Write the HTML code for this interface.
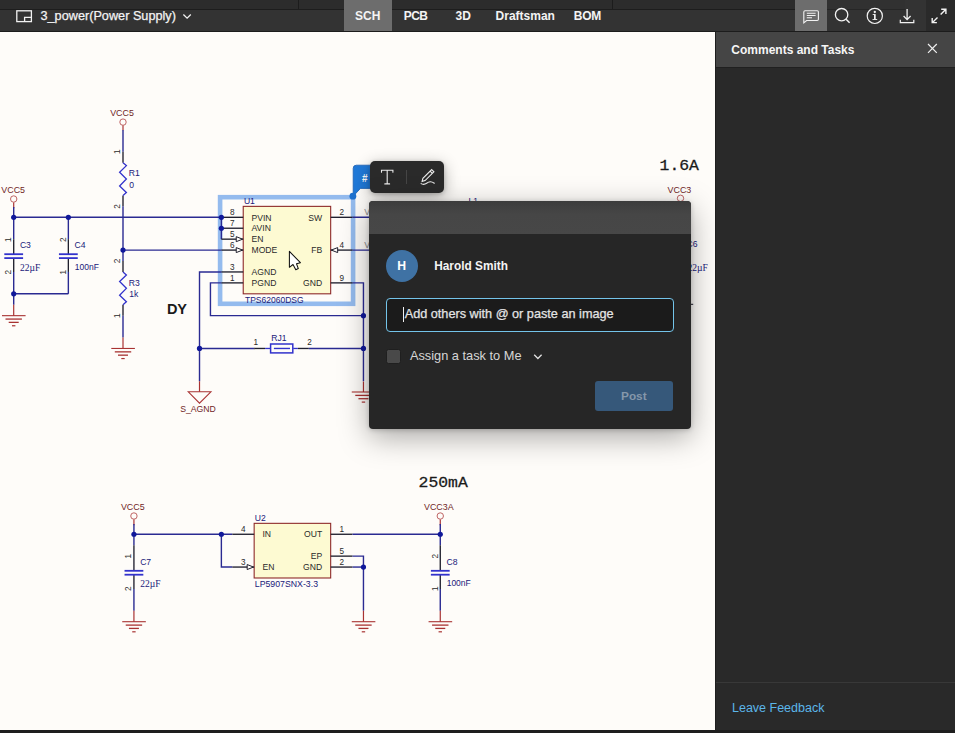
<!DOCTYPE html>
<html>
<head>
<meta charset="utf-8">
<title>3_power</title>
<style>
*{box-sizing:border-box;margin:0;padding:0}
html,body{width:955px;height:733px;overflow:hidden;background:#fefcf9;font-family:"Liberation Sans",sans-serif;}
#topstrip{position:absolute;left:0;top:0;width:955px;height:9px;background:#2c2c2c;}
#topstrip .v{position:absolute;top:0;width:1px;height:9px;background:#1c1c1c;}
#topline{position:absolute;left:0;top:9px;width:955px;height:1px;background:#1d1d1d;}
#toolbar{position:absolute;left:0;top:10px;width:955px;height:22px;background:#333333;border-bottom:1px solid #1c1c1c;}
#toolbar .t{position:absolute;top:-4px;height:21px;line-height:21px;color:#f4f4f4;font-size:12px;font-weight:bold;white-space:nowrap;}
#title{-webkit-text-stroke:0.25px #f4f4f4;position:absolute;left:40.5px;top:-4px;height:21px;line-height:21px;color:#f4f4f4;font-size:12.7px;white-space:nowrap;}
#schtab{position:absolute;left:344px;top:-10px;width:48px;height:31px;background:#6d6d6d;}
#cmtbtn{position:absolute;left:795px;top:-10px;width:32px;height:31px;background:#6d6d6d;}
#expbtn{position:absolute;left:926px;top:-10px;width:29px;height:31px;background:#2a2a2a;}
#tbicons{position:absolute;left:0;top:0;width:955px;height:32px;}
#canvas{position:absolute;left:0;top:32px;width:715px;height:698px;background:#fefcf9;overflow:hidden;}
#bottomline{position:absolute;left:0;top:730px;width:955px;height:3px;background:#1e1e1e;}
#panel{position:absolute;left:715px;top:32px;width:240px;height:698px;background:#292929;border-left:1px solid #1e1e1e;}
#phead{position:absolute;left:0;top:0;width:239px;height:36px;background:#454545;border-bottom:1px solid #202020;}
#phead span{position:absolute;left:15.3px;top:-0.5px;line-height:36px;font-size:12px;font-weight:bold;color:#f6f6f6;white-space:nowrap;}
#pfoot{position:absolute;left:0;top:650px;width:239px;height:48px;border-top:1px solid #383838;}
#pfoot span{position:absolute;left:16px;top:18px;line-height:15px;font-size:12.5px;color:#5bb6ea;white-space:nowrap;}
svg text{font-family:"Liberation Sans",sans-serif;}
/* floating comment UI */
#tag{position:absolute;left:0;top:0;}
#mini{position:absolute;left:369.5px;top:161px;width:74.5px;height:32px;background:#2a2a2a;border-radius:5px;box-shadow:0 4px 16px rgba(0,0,0,.32),0 1px 4px rgba(0,0,0,.2);}
#mini .div{position:absolute;left:36.5px;top:9px;width:1px;height:14px;background:#454545;}
#dlg{position:absolute;left:369.2px;top:201px;width:321.8px;height:227.5px;background:#262626;border-radius:4px;box-shadow:0 8px 30px rgba(0,0,0,.34),0 1px 5px rgba(0,0,0,.2);overflow:hidden;}
#dlg .hd{position:absolute;left:0;top:0;width:100%;height:32.5px;background:linear-gradient(#3c3c3c,#464646 40%,#474747);}
#av{position:absolute;left:16.4px;top:48.8px;width:32.4px;height:32.4px;border-radius:50%;background:#3f72a4;color:#fff;font-weight:bold;font-size:12.2px;text-align:center;line-height:32.8px;}
#nm{position:absolute;left:65px;top:57px;line-height:16px;font-size:11.85px;font-weight:bold;color:#f4f4f4;white-space:nowrap;}
#inp{position:absolute;left:16.5px;top:97px;width:288.5px;height:34px;border:1px solid #74c4ea;border-radius:4px;background:#1b1b1b;}
#inp span{-webkit-text-stroke:0.25px #e4e4e4;position:absolute;left:18px;top:7px;line-height:16px;font-size:12.7px;color:#e4e4e4;white-space:nowrap;}
#inp i{position:absolute;left:16.5px;top:8px;width:1px;height:15px;background:#f0f0f0;}
#cb{position:absolute;left:17.3px;top:147.5px;width:15px;height:15px;background:#494949;border:1px solid #1f1f1f;border-radius:2.5px;}
#as{position:absolute;left:40.7px;top:147px;line-height:16px;font-size:12.8px;color:#d6d6d6;white-space:nowrap;}
#post{position:absolute;left:225.5px;top:179.7px;width:78.3px;height:30.3px;border-radius:3px;background:#36587a;color:#8597aa;font-weight:bold;font-size:11.8px;text-align:center;line-height:30.5px;}
</style>
</head>
<body>
<div id="canvas">
<svg id="sch" width="715" height="698" viewBox="0 32 715 698">
<rect x="220.1" y="197.2" width="133" height="106.6" fill="none" stroke="#94bbee" stroke-width="4.6"/>
<line x1="13.7" y1="217.3" x2="221.37" y2="217.3" stroke="#2a2a92" stroke-width="1.4" />
<line x1="13.7" y1="202.2" x2="13.7" y2="208.2" stroke="#a83232" stroke-width="1.2" />
<circle cx="13.7" cy="199" r="3.2" fill="#fefcf9" stroke="#b85454" stroke-width="0.9"/>
<text x="13.2" y="193.0" fill="#701e1e" font-size="8.9" text-anchor="middle" >VCC5</text>
<line x1="13.7" y1="207" x2="13.7" y2="217.3" stroke="#2a2a92" stroke-width="1.4" />
<line x1="13.7" y1="217.3" x2="13.7" y2="239.16" stroke="#2a2a92" stroke-width="1.4" />
<line x1="13.7" y1="239.16" x2="13.7" y2="254.2" stroke="#20202e" stroke-width="1.35" />
<line x1="13.7" y1="258.09999999999997" x2="13.7" y2="271.95" stroke="#20202e" stroke-width="1.35" />
<line x1="4.299999999999999" y1="254.2" x2="23.1" y2="254.2" stroke="#3232cc" stroke-width="1.8" />
<line x1="4.299999999999999" y1="258.09999999999997" x2="23.1" y2="258.09999999999997" stroke="#3232cc" stroke-width="1.8" />
<text transform="translate(11.1,239.7) rotate(-90)" fill="#2a2a2a" font-size="8.2" text-anchor="middle">1</text>
<text transform="translate(11.1,272.2) rotate(-90)" fill="#2a2a2a" font-size="8.2" text-anchor="middle">2</text>
<text x="19.9" y="248.2" fill="#20207a" font-size="8.6" text-anchor="start" >C3</text>
<text x="20.1" y="270.5" fill="#20207a" font-size="9.5" text-anchor="start" style="font-family:Liberation Serif">22µF</text>
<line x1="13.7" y1="271.95" x2="13.7" y2="293.81" stroke="#2a2a92" stroke-width="1.4" />
<line x1="13.7" y1="293.81" x2="68.35" y2="293.81" stroke="#2a2a92" stroke-width="1.4" />
<line x1="68.35" y1="217.3" x2="68.35" y2="239.16" stroke="#2a2a92" stroke-width="1.4" />
<line x1="68.35" y1="239.16" x2="68.35" y2="254.2" stroke="#20202e" stroke-width="1.35" />
<line x1="68.35" y1="258.09999999999997" x2="68.35" y2="271.95" stroke="#20202e" stroke-width="1.35" />
<line x1="58.949999999999996" y1="254.2" x2="77.75" y2="254.2" stroke="#3232cc" stroke-width="1.8" />
<line x1="58.949999999999996" y1="258.09999999999997" x2="77.75" y2="258.09999999999997" stroke="#3232cc" stroke-width="1.8" />
<text transform="translate(65.75,239.7) rotate(-90)" fill="#2a2a2a" font-size="8.2" text-anchor="middle">2</text>
<text transform="translate(65.75,272.2) rotate(-90)" fill="#2a2a2a" font-size="8.2" text-anchor="middle">1</text>
<text x="74.55" y="248.2" fill="#20207a" font-size="8.6" text-anchor="start" >C4</text>
<text x="74.75" y="269.8" fill="#20207a" font-size="8.5" text-anchor="start" >100nF</text>
<line x1="68.35" y1="271.95" x2="68.35" y2="293.81" stroke="#2a2a92" stroke-width="1.4" />
<line x1="13.7" y1="293.81" x2="13.7" y2="304.74" stroke="#2a2a92" stroke-width="1.4" />
<line x1="13.7" y1="304.74" x2="13.7" y2="315.67" stroke="#a83232" stroke-width="1.2" />
<line x1="2.0" y1="315.67" x2="25.6" y2="315.67" stroke="#a83232" stroke-width="1.1" />
<line x1="5.5" y1="319.07" x2="21.9" y2="319.07" stroke="#a83232" stroke-width="1.3" />
<line x1="8.7" y1="322.37" x2="18.7" y2="322.37" stroke="#a83232" stroke-width="1.3" />
<line x1="12.0" y1="325.77000000000004" x2="15.399999999999999" y2="325.77000000000004" stroke="#a83232" stroke-width="1.2" />
<line x1="123.0" y1="125.3" x2="123.0" y2="130.3" stroke="#a83232" stroke-width="1.2" />
<circle cx="123.0" cy="122.1" r="3.2" fill="#fefcf9" stroke="#b85454" stroke-width="0.9"/>
<text x="122" y="116.1" fill="#701e1e" font-size="8.9" text-anchor="middle" >VCC5</text>
<line x1="123.0" y1="130" x2="123.0" y2="151.72" stroke="#2a2a92" stroke-width="1.4" />
<line x1="123.0" y1="151.72" x2="123.0" y2="162.65" stroke="#20202e" stroke-width="1.35" />
<line x1="123.0" y1="195.44" x2="123.0" y2="206.37" stroke="#20202e" stroke-width="1.35" />
<polyline points="123.0,162.65 126.4,165.6011 119.6,172.1591 126.4,179.04500000000002 119.6,185.9309 126.4,192.4889 123.0,195.44" stroke="#3232cc" stroke-width="1.3" fill="none" stroke-linejoin="miter" />
<text transform="translate(119.8,151.72) rotate(-90)" fill="#2a2a2a" font-size="8.2" text-anchor="middle">1</text>
<text transform="translate(119.8,206.37) rotate(-90)" fill="#2a2a2a" font-size="8.2" text-anchor="middle">2</text>
<text x="128.8" y="176.4218" fill="#20207a" font-size="8.6" text-anchor="start" >R1</text>
<text x="129.2" y="187.73435" fill="#20207a" font-size="8.6" text-anchor="start" >0</text>
<line x1="123.0" y1="206.37" x2="123.0" y2="261.02" stroke="#2a2a92" stroke-width="1.4" />
<line x1="123.0" y1="261.02" x2="123.0" y2="271.95" stroke="#20202e" stroke-width="1.35" />
<line x1="123.0" y1="304.74" x2="123.0" y2="315.66999999999996" stroke="#20202e" stroke-width="1.35" />
<polyline points="123.0,271.95 126.4,274.9011 119.6,281.4591 126.4,288.345 119.6,295.2309 126.4,301.7889 123.0,304.74" stroke="#3232cc" stroke-width="1.3" fill="none" stroke-linejoin="miter" />
<text transform="translate(119.8,261.02) rotate(-90)" fill="#2a2a2a" font-size="8.2" text-anchor="middle">2</text>
<text transform="translate(119.8,315.66999999999996) rotate(-90)" fill="#2a2a2a" font-size="8.2" text-anchor="middle">1</text>
<text x="128.8" y="285.7218" fill="#20207a" font-size="8.6" text-anchor="start" >R3</text>
<text x="129.2" y="297.03435" fill="#20207a" font-size="8.6" text-anchor="start" >1k</text>
<line x1="123.0" y1="315.67" x2="123.0" y2="337.53" stroke="#2a2a92" stroke-width="1.4" />
<line x1="123.0" y1="337.53" x2="123.0" y2="348.46" stroke="#a83232" stroke-width="1.2" />
<line x1="111.3" y1="348.46" x2="134.9" y2="348.46" stroke="#a83232" stroke-width="1.1" />
<line x1="114.8" y1="351.85999999999996" x2="131.2" y2="351.85999999999996" stroke="#a83232" stroke-width="1.3" />
<line x1="118.0" y1="355.15999999999997" x2="128.0" y2="355.15999999999997" stroke="#a83232" stroke-width="1.3" />
<line x1="121.3" y1="358.56" x2="124.7" y2="358.56" stroke="#a83232" stroke-width="1.2" />
<line x1="123.0" y1="250.09" x2="221.37" y2="250.09" stroke="#2a2a92" stroke-width="1.4" />
<line x1="221.37" y1="217.3" x2="221.37" y2="239.16" stroke="#2a2a92" stroke-width="1.4" />
<polyline points="221.37,271.95 199.51,271.95 199.51,381.25" stroke="#2a2a92" stroke-width="1.4" fill="none" stroke-linejoin="miter" />
<polyline points="221.37,282.88 210.44,282.88 210.44,315.67 363.46,315.67" stroke="#2a2a92" stroke-width="1.4" fill="none" stroke-linejoin="miter" />
<line x1="199.51" y1="348.46" x2="254.16" y2="348.46" stroke="#2a2a92" stroke-width="1.4" />
<line x1="308.81" y1="348.46" x2="363.46" y2="348.46" stroke="#2a2a92" stroke-width="1.4" />
<polyline points="352.53,282.88 363.46,282.88 363.46,381.25" stroke="#2a2a92" stroke-width="1.4" fill="none" stroke-linejoin="miter" />
<line x1="352.53" y1="217.3" x2="494.62" y2="217.3" stroke="#2a2a92" stroke-width="1.4" />
<line x1="352.53" y1="250.09" x2="494.62" y2="250.09" stroke="#2a2a92" stroke-width="1.4" />
<rect x="243.23" y="206.37" width="87.44" height="87.44" fill="#fdfad2" stroke="#8e2a2a" stroke-width="1.1"/>
<line x1="221.37" y1="217.3" x2="243.23" y2="217.3" stroke="#20202e" stroke-width="1.35" />
<text x="232.23" y="215.10000000000002" fill="#2a2a2a" font-size="8.2" text-anchor="middle" >8</text>
<text x="251.53" y="220.5" fill="#2a2a2a" font-size="8.6" text-anchor="start" >PVIN</text>
<line x1="221.37" y1="228.23" x2="243.23" y2="228.23" stroke="#20202e" stroke-width="1.35" />
<text x="232.23" y="226.03" fill="#2a2a2a" font-size="8.2" text-anchor="middle" >7</text>
<text x="251.53" y="231.42999999999998" fill="#2a2a2a" font-size="8.6" text-anchor="start" >AVIN</text>
<line x1="221.37" y1="239.16" x2="243.23" y2="239.16" stroke="#20202e" stroke-width="1.35" />
<text x="232.23" y="236.96" fill="#2a2a2a" font-size="8.2" text-anchor="middle" >5</text>
<text x="251.53" y="242.35999999999999" fill="#2a2a2a" font-size="8.6" text-anchor="start" >EN</text>
<polygon points="242.63,239.16 236.23,236.66 236.23,241.66" fill="#fefcf9" stroke="#20202e" stroke-width="1"/>
<line x1="221.37" y1="250.09" x2="243.23" y2="250.09" stroke="#20202e" stroke-width="1.35" />
<text x="232.23" y="247.89000000000001" fill="#2a2a2a" font-size="8.2" text-anchor="middle" >6</text>
<text x="251.53" y="253.29" fill="#2a2a2a" font-size="8.6" text-anchor="start" >MODE</text>
<polygon points="242.63,250.09 236.23,247.59 236.23,252.59" fill="#fefcf9" stroke="#20202e" stroke-width="1"/>
<line x1="221.37" y1="271.95" x2="243.23" y2="271.95" stroke="#20202e" stroke-width="1.35" />
<text x="232.23" y="269.75" fill="#2a2a2a" font-size="8.2" text-anchor="middle" >3</text>
<text x="251.53" y="275.15" fill="#2a2a2a" font-size="8.6" text-anchor="start" >AGND</text>
<line x1="221.37" y1="282.88" x2="243.23" y2="282.88" stroke="#20202e" stroke-width="1.35" />
<text x="232.23" y="280.68" fill="#2a2a2a" font-size="8.2" text-anchor="middle" >1</text>
<text x="251.53" y="286.08" fill="#2a2a2a" font-size="8.6" text-anchor="start" >PGND</text>
<line x1="330.67" y1="217.3" x2="352.53" y2="217.3" stroke="#20202e" stroke-width="1.35" />
<text x="341.67" y="215.10000000000002" fill="#2a2a2a" font-size="8.2" text-anchor="middle" >2</text>
<text x="322.17" y="220.5" fill="#2a2a2a" font-size="8.6" text-anchor="end" >SW</text>
<line x1="330.67" y1="250.09" x2="352.53" y2="250.09" stroke="#20202e" stroke-width="1.35" />
<text x="341.67" y="247.89000000000001" fill="#2a2a2a" font-size="8.2" text-anchor="middle" >4</text>
<text x="322.17" y="253.29" fill="#2a2a2a" font-size="8.6" text-anchor="end" >FB</text>
<polygon points="331.27000000000004,250.09 337.67,247.59 337.67,252.59" fill="#fefcf9" stroke="#20202e" stroke-width="1"/>
<line x1="330.67" y1="282.88" x2="352.53" y2="282.88" stroke="#20202e" stroke-width="1.35" />
<text x="341.67" y="280.68" fill="#2a2a2a" font-size="8.2" text-anchor="middle" >9</text>
<text x="322.17" y="286.08" fill="#2a2a2a" font-size="8.6" text-anchor="end" >GND</text>
<text x="243.9" y="203.6" fill="#20207a" font-size="8.6" text-anchor="start" >U1</text>
<text x="245.0" y="303.0" fill="#20207a" font-size="8.5" text-anchor="start" >TPS62060DSG</text>
<circle cx="13.7" cy="217.3" r="2.6" fill="#10189a"/>
<circle cx="68.35" cy="217.3" r="2.6" fill="#10189a"/>
<circle cx="13.7" cy="293.81" r="2.6" fill="#10189a"/>
<circle cx="123.0" cy="250.09" r="2.6" fill="#10189a"/>
<circle cx="221.37" cy="217.3" r="2.6" fill="#10189a"/>
<circle cx="221.37" cy="228.23" r="2.6" fill="#10189a"/>
<circle cx="199.51" cy="348.46" r="2.6" fill="#10189a"/>
<circle cx="363.46" cy="315.67" r="2.6" fill="#10189a"/>
<circle cx="363.46" cy="348.46" r="2.6" fill="#10189a"/>
<line x1="254.16" y1="348.46" x2="265.09" y2="348.46" stroke="#20202e" stroke-width="1.35" />
<line x1="297.88" y1="348.46" x2="308.81" y2="348.46" stroke="#20202e" stroke-width="1.35" />
<line x1="265.09" y1="348.46" x2="270.2" y2="348.46" stroke="#3232cc" stroke-width="1.3" />
<line x1="293.2" y1="348.46" x2="297.88" y2="348.46" stroke="#3232cc" stroke-width="1.3" />
<rect x="270.6" y="344.0" width="22.2" height="8.9" fill="none" stroke="#3232cc" stroke-width="1.5"/>
<line x1="273.9" y1="348.46" x2="290" y2="348.46" stroke="#3232cc" stroke-width="1.4" />
<text x="271.2" y="340.7" fill="#20207a" font-size="8.6" text-anchor="start" >RJ1</text>
<text x="255.8" y="345.4" fill="#2a2a2a" font-size="8.2" text-anchor="middle" >1</text>
<text x="309.5" y="345.4" fill="#2a2a2a" font-size="8.2" text-anchor="middle" >2</text>
<line x1="199.51" y1="381.25" x2="199.51" y2="391.8" stroke="#a83232" stroke-width="1.2" />
<polygon points="188.3,391.8 210.9,391.8 199.51,403.1" fill="none" stroke="#a83232" stroke-width="1.1"/>
<text x="198" y="411.9" fill="#701e1e" font-size="8.7" text-anchor="middle" >S_AGND</text>
<line x1="363.46" y1="381.5" x2="363.46" y2="392" stroke="#a83232" stroke-width="1.2" />
<line x1="351.76" y1="392" x2="375.35999999999996" y2="392" stroke="#a83232" stroke-width="1.1" />
<line x1="355.26" y1="395.4" x2="371.65999999999997" y2="395.4" stroke="#a83232" stroke-width="1.3" />
<line x1="358.46" y1="398.7" x2="368.46" y2="398.7" stroke="#a83232" stroke-width="1.3" />
<line x1="361.76" y1="402.1" x2="365.15999999999997" y2="402.1" stroke="#a83232" stroke-width="1.2" />
<text x="166.9" y="313.7" fill="#1a1a1a" font-size="14.5" text-anchor="start" font-weight="bold">DY</text>
<text transform="translate(659.6,169.8) scale(1,0.86)" fill="#1a1a1a" stroke="#1a1a1a" stroke-width="0.3" font-size="16.4" style="font-family:Liberation Mono">1.6A</text>
<line x1="680.5" y1="201.5" x2="680.5" y2="209.5" stroke="#a83232" stroke-width="1.2" />
<circle cx="680.5" cy="198.3" r="3.2" fill="#fefcf9" stroke="#b85454" stroke-width="0.9"/>
<text x="679.4" y="193.0" fill="#701e1e" font-size="8.9" text-anchor="middle" >VCC3</text>
<text x="686.5" y="247.4" fill="#20207a" font-size="8.6" text-anchor="start" >C6</text>
<text x="687.5" y="271" fill="#20207a" font-size="9.5" text-anchor="start" style="font-family:Liberation Serif">22µF</text>
<line x1="690" y1="304.3" x2="693.2" y2="304.3" stroke="#20202e" stroke-width="1" />
<text x="468.5" y="203.6" fill="#20207a" font-size="8.6" text-anchor="start" >L1</text>
<text x="364.2" y="215.2" fill="#8a8a8a" font-size="8.6" text-anchor="start" >VCC</text>
<text x="364.2" y="248.3" fill="#8a8a8a" font-size="8.6" text-anchor="start" >VFB</text>
<text transform="translate(418.6,487.1) scale(1,0.86)" fill="#1a1a1a" stroke="#1a1a1a" stroke-width="0.3" font-size="16.4" style="font-family:Liberation Mono">250mA</text>
<line x1="133.93" y1="519.2" x2="133.93" y2="525.2" stroke="#a83232" stroke-width="1.2" />
<circle cx="133.93" cy="516" r="3.2" fill="#fefcf9" stroke="#b85454" stroke-width="0.9"/>
<text x="132.8" y="510.0" fill="#701e1e" font-size="8.9" text-anchor="middle" >VCC5</text>
<line x1="133.93" y1="524" x2="133.93" y2="534.27" stroke="#2a2a92" stroke-width="1.4" />
<line x1="133.93" y1="534.27" x2="232.3" y2="534.27" stroke="#2a2a92" stroke-width="1.4" />
<line x1="133.93" y1="534.27" x2="133.93" y2="545.2" stroke="#2a2a92" stroke-width="1.4" />
<line x1="133.93" y1="545.2" x2="133.93" y2="570.8" stroke="#20202e" stroke-width="1.35" />
<line x1="133.93" y1="574.6999999999999" x2="133.93" y2="588.92" stroke="#20202e" stroke-width="1.35" />
<line x1="124.53" y1="570.8" x2="143.33" y2="570.8" stroke="#3232cc" stroke-width="1.8" />
<line x1="124.53" y1="574.6999999999999" x2="143.33" y2="574.6999999999999" stroke="#3232cc" stroke-width="1.8" />
<text transform="translate(131.33,556.3) rotate(-90)" fill="#2a2a2a" font-size="8.2" text-anchor="middle">1</text>
<text transform="translate(131.33,588.8) rotate(-90)" fill="#2a2a2a" font-size="8.2" text-anchor="middle">2</text>
<text x="140.13" y="564.8" fill="#20207a" font-size="8.6" text-anchor="start" >C7</text>
<text x="140.33" y="587.0999999999999" fill="#20207a" font-size="9.5" text-anchor="start" style="font-family:Liberation Serif">22µF</text>
<line x1="133.93" y1="588.92" x2="133.93" y2="610.78" stroke="#2a2a92" stroke-width="1.4" />
<line x1="133.93" y1="610.7800000000001" x2="133.93" y2="621.71" stroke="#a83232" stroke-width="1.2" />
<line x1="122.23" y1="621.71" x2="145.83" y2="621.71" stroke="#a83232" stroke-width="1.1" />
<line x1="125.73" y1="625.11" x2="142.13" y2="625.11" stroke="#a83232" stroke-width="1.3" />
<line x1="128.93" y1="628.4100000000001" x2="138.93" y2="628.4100000000001" stroke="#a83232" stroke-width="1.3" />
<line x1="132.23000000000002" y1="631.8100000000001" x2="135.63" y2="631.8100000000001" stroke="#a83232" stroke-width="1.2" />
<polyline points="221.37,534.27 221.37,567.06 232.3,567.06" stroke="#2a2a92" stroke-width="1.4" fill="none" stroke-linejoin="miter" />
<rect x="254.16" y="523.34" width="76.50999999999999" height="54.65" fill="#fdfad2" stroke="#8e2a2a" stroke-width="1.1"/>
<line x1="232.3" y1="534.27" x2="254.16" y2="534.27" stroke="#20202e" stroke-width="1.35" />
<text x="243.16" y="532.0699999999999" fill="#2a2a2a" font-size="8.2" text-anchor="middle" >4</text>
<text x="262.46" y="537.47" fill="#2a2a2a" font-size="8.6" text-anchor="start" >IN</text>
<line x1="232.3" y1="567.06" x2="254.16" y2="567.06" stroke="#20202e" stroke-width="1.35" />
<text x="243.16" y="564.8599999999999" fill="#2a2a2a" font-size="8.2" text-anchor="middle" >3</text>
<text x="262.46" y="570.26" fill="#2a2a2a" font-size="8.6" text-anchor="start" >EN</text>
<polygon points="253.56,567.06 247.16,564.56 247.16,569.56" fill="#fefcf9" stroke="#20202e" stroke-width="1"/>
<line x1="330.67" y1="534.27" x2="352.53" y2="534.27" stroke="#20202e" stroke-width="1.35" />
<text x="341.67" y="532.0699999999999" fill="#2a2a2a" font-size="8.2" text-anchor="middle" >1</text>
<text x="322.17" y="537.47" fill="#2a2a2a" font-size="8.6" text-anchor="end" >OUT</text>
<line x1="330.67" y1="556.13" x2="352.53" y2="556.13" stroke="#20202e" stroke-width="1.35" />
<text x="341.67" y="553.93" fill="#2a2a2a" font-size="8.2" text-anchor="middle" >5</text>
<text x="322.17" y="559.33" fill="#2a2a2a" font-size="8.6" text-anchor="end" >EP</text>
<line x1="330.67" y1="567.06" x2="352.53" y2="567.06" stroke="#20202e" stroke-width="1.35" />
<text x="341.67" y="564.8599999999999" fill="#2a2a2a" font-size="8.2" text-anchor="middle" >2</text>
<text x="322.17" y="570.26" fill="#2a2a2a" font-size="8.6" text-anchor="end" >GND</text>
<text x="254.8" y="520.7" fill="#20207a" font-size="8.6" text-anchor="start" >U2</text>
<text x="254.8" y="587.0" fill="#20207a" font-size="8.75" text-anchor="start" >LP5907SNX-3.3</text>
<line x1="352.53" y1="534.27" x2="439.97" y2="534.27" stroke="#2a2a92" stroke-width="1.4" />
<line x1="440.27000000000004" y1="519.2" x2="440.27000000000004" y2="525.2" stroke="#a83232" stroke-width="1.2" />
<circle cx="440.27000000000004" cy="516" r="3.2" fill="#fefcf9" stroke="#b85454" stroke-width="0.9"/>
<text x="438.77000000000004" y="510.0" fill="#701e1e" font-size="8.9" text-anchor="middle" >VCC3A</text>
<line x1="440.27000000000004" y1="524" x2="440.27000000000004" y2="534.27" stroke="#2a2a92" stroke-width="1.4" />
<line x1="440.27000000000004" y1="534.27" x2="440.27000000000004" y2="545.2" stroke="#2a2a92" stroke-width="1.4" />
<line x1="440.27000000000004" y1="545.2" x2="440.27000000000004" y2="570.8" stroke="#20202e" stroke-width="1.35" />
<line x1="440.27000000000004" y1="574.6999999999999" x2="440.27000000000004" y2="588.92" stroke="#20202e" stroke-width="1.35" />
<line x1="430.87000000000006" y1="570.8" x2="449.67" y2="570.8" stroke="#3232cc" stroke-width="1.8" />
<line x1="430.87000000000006" y1="574.6999999999999" x2="449.67" y2="574.6999999999999" stroke="#3232cc" stroke-width="1.8" />
<text transform="translate(437.67,556.3) rotate(-90)" fill="#2a2a2a" font-size="8.2" text-anchor="middle">2</text>
<text transform="translate(437.67,588.8) rotate(-90)" fill="#2a2a2a" font-size="8.2" text-anchor="middle">1</text>
<text x="446.47" y="564.8" fill="#20207a" font-size="8.6" text-anchor="start" >C8</text>
<text x="446.67" y="586.4" fill="#20207a" font-size="8.5" text-anchor="start" >100nF</text>
<line x1="440.27000000000004" y1="588.92" x2="440.27000000000004" y2="610.78" stroke="#2a2a92" stroke-width="1.4" />
<line x1="440.27000000000004" y1="610.7800000000001" x2="440.27000000000004" y2="621.71" stroke="#a83232" stroke-width="1.2" />
<line x1="428.57000000000005" y1="621.71" x2="452.17" y2="621.71" stroke="#a83232" stroke-width="1.1" />
<line x1="432.07000000000005" y1="625.11" x2="448.47" y2="625.11" stroke="#a83232" stroke-width="1.3" />
<line x1="435.27000000000004" y1="628.4100000000001" x2="445.27000000000004" y2="628.4100000000001" stroke="#a83232" stroke-width="1.3" />
<line x1="438.57000000000005" y1="631.8100000000001" x2="441.97" y2="631.8100000000001" stroke="#a83232" stroke-width="1.2" />
<polyline points="352.53,556.13 363.46,556.13 363.46,610.78" stroke="#2a2a92" stroke-width="1.4" fill="none" stroke-linejoin="miter" />
<line x1="352.53" y1="567.06" x2="363.46" y2="567.06" stroke="#2a2a92" stroke-width="1.4" />
<line x1="363.46" y1="610.7800000000001" x2="363.46" y2="621.71" stroke="#a83232" stroke-width="1.2" />
<line x1="351.76" y1="621.71" x2="375.35999999999996" y2="621.71" stroke="#a83232" stroke-width="1.1" />
<line x1="355.26" y1="625.11" x2="371.65999999999997" y2="625.11" stroke="#a83232" stroke-width="1.3" />
<line x1="358.46" y1="628.4100000000001" x2="368.46" y2="628.4100000000001" stroke="#a83232" stroke-width="1.3" />
<line x1="361.76" y1="631.8100000000001" x2="365.15999999999997" y2="631.8100000000001" stroke="#a83232" stroke-width="1.2" />
<circle cx="133.93" cy="534.27" r="2.6" fill="#10189a"/>
<circle cx="221.37" cy="534.27" r="2.6" fill="#10189a"/>
<circle cx="363.46" cy="567.06" r="2.6" fill="#10189a"/>
<circle cx="440.27000000000004" cy="534.27" r="2.6" fill="#10189a"/>
<path d="M289.4 251.4 L289.4 267.3 L293 264.5 L295.8 269.7 L298.3 268.6 L296.5 263.8 L300.4 262.7 Z" fill="#ffffff" stroke="#111" stroke-width="1.05" stroke-linejoin="round"/>
</svg>
</div>
<svg id="tag" width="715" height="733" viewBox="0 0 715 733">
<path d="M353.2 196.3 L353.2 168.3 Q353.2 165.2 356.3 165.2 L380 165.2 L380 188.4 L360.4 188.4 Z" fill="#2079d8" stroke="#1b5fb2" stroke-width="0.8"/>
<circle cx="352.9" cy="196.2" r="3.4" fill="#1f72cf"/>
<text x="361.9" y="181.8" font-size="10" font-weight="bold" fill="#ffffff" font-family="Liberation Sans">#</text>
</svg>
<div id="mini"><div class="div"></div>
<svg width="75" height="32" viewBox="369.5 161 75 32" style="position:absolute;left:0;top:0">
<g stroke="#ececec" stroke-width="1.1" fill="none" stroke-linecap="round">
<path d="M381 172.3 V170.2 H392.4 V172.3 M386.7 170.2 V183.9 M384.3 183.9 H389.1"/>
<path d="M431.2 169.6 L433.4 171.8 L424.6 180.6 L421.6 181.4 L422.4 178.4 Z M429.6 171.2 L431.8 173.4"/>
<path d="M420.6 183.6 C423.5 185.6 425.5 183.6 427.5 182.4 C429.8 181 431.6 181.6 433.8 183.2"/>
</g>
</svg>
</div>
<div id="dlg">
  <div class="hd"></div>
  <div id="av">H</div>
  <div id="nm">Harold Smith</div>
  <div id="inp"><i></i><span>Add others with @ or paste an image</span></div>
  <div id="cb"></div>
  <div id="as">Assign a task to Me</div>
  <svg width="10" height="6" viewBox="0 0 10 6" style="position:absolute;left:163.7px;top:152.6px"><path d="M1.2 0.8 L4.9 4.5 L8.6 0.8" stroke="#e0e0e0" stroke-width="1.3" fill="none"/></svg>
  <div id="post">Post</div>
</div>
<div id="topstrip"><div class="v" style="left:298px"></div><div class="v" style="left:612px"></div></div>
<div id="topline"></div>
<div style="position:absolute;left:827px;top:0;width:78px;height:9px;background:#313131"></div>
<div style="position:absolute;left:827px;top:9px;width:78px;height:1px;background:#262626"></div>
<div style="position:absolute;left:905px;top:0;width:21px;height:10px;background:#333333"></div>
<div style="position:absolute;left:905px;top:9px;width:1px;height:22px;background:#2b2b2b"></div>
<div id="toolbar">
  <div id="schtab"></div>
  <div id="cmtbtn"></div>
  <div id="expbtn"></div>
  <div id="title">3_power(Power Supply)</div>
  <div class="t" style="left:355px">SCH</div>
  <div class="t" style="left:403.8px;letter-spacing:-0.6px">PCB</div>
  <div class="t" style="left:455.6px">3D</div>
  <div class="t" style="left:495.6px">Draftsman</div>
  <div class="t" style="left:573.7px;letter-spacing:-0.2px">BOM</div>
</div>
<svg id="tbicons" viewBox="0 0 955 32">
<g stroke="#f2f2f2" fill="none" stroke-width="1.2">
<!-- doc icon -->
<rect x="16.8" y="10.8" width="14.6" height="10.8" stroke-width="1.3"/>
<path d="M24.6 21.6 V17.3 H31.4" stroke-width="1.3"/>
<!-- title chevron -->
<path d="M183.4 14.5 L187.1 18.2 L190.8 14.5" stroke-width="1.3"/>
<!-- comment -->
<path d="M803.8 22.9 V12 Q803.8 10.8 805 10.8 H817.2 Q818.4 10.8 818.4 12 V19.3 Q818.4 20.5 817.2 20.5 H806.6 Z" stroke-width="1.1"/>
<path d="M806.8 13.2 H815.6 M806.8 15.5 H815.6 M806.8 17.7 H812" stroke-width="1.1"/>
<!-- search -->
<circle cx="841.6" cy="14.7" r="6.2" stroke-width="1.3"/>
<path d="M846.1 19.2 L849.6 22.7" stroke-width="1.5"/>
<!-- info -->
<circle cx="874.8" cy="15.9" r="7.6" stroke-width="1.2"/>
<!-- download -->
<path d="M907.1 9 V19.4 M903.6 16 L907.1 19.6 L910.6 16" stroke-width="1.3"/>
<path d="M900.3 19.8 V22.6 H913.8 V19.8" stroke-width="1.2"/>
<!-- expand -->
<path d="M941.2 9.2 H945.9 V13.9 M945.6 9.5 L940.6 14.5 M937.5 17.6 L932.5 22.6 M932.2 17.9 V22.6 H936.9" stroke-width="1.4"/>
<!-- close x -->
</g>
<g fill="#f2f2f2"><circle cx="874.8" cy="12" r="1.15"/><rect x="874" y="14.1" width="1.7" height="5.6"/><rect x="872.7" y="14.1" width="2" height="0.9"/><rect x="872.5" y="19" width="4.7" height="0.9"/></g>
</svg>
<div id="panel">
  <div id="phead"><span>Comments and Tasks</span>
  <svg width="11" height="11" viewBox="0 0 11 11" style="position:absolute;left:211.4px;top:10.6px"><path d="M1 1 L9.8 9.8 M9.8 1 L1 9.8" stroke="#f0f0f0" stroke-width="1.2"/></svg>
  </div>
  <div id="pfoot"><span>Leave Feedback</span></div>
</div>
<div id="bottomline"></div>
</body>
</html>
